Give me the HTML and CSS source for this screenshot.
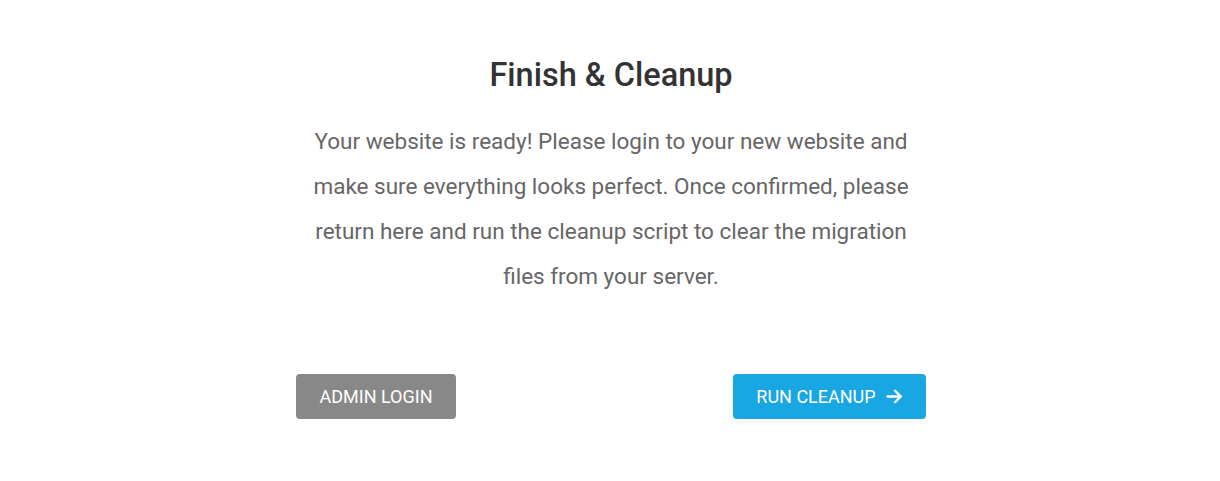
FILE: index.html
```html
<!DOCTYPE html>
<html>
<head>
<meta charset="utf-8">
<link rel="stylesheet" href="styles.css">
</head>
<body>
<div class="wrap">
  <h1 class="title">Finish &amp; Cleanup</h1>
  <p class="text">Your website is ready! Please login to your new website and make sure everything looks perfect. Once confirmed, please return here and run the cleanup script to clear the migration files from your server.</p>
  <div class="actions">
    <button class="btn btn-gray">ADMIN LOGIN</button>
    <button class="btn btn-blue">RUN CLEANUP
      <svg class="arrow" width="17" height="15" viewBox="0 0 17 15"><path d="M1.5 7.5h13.5M9 1.8l5.8 5.7L9 13.2" fill="none" stroke="#fff" stroke-width="2.3" stroke-linecap="round" stroke-linejoin="round"/></svg>
    </button>
  </div>
</div>
</body>
</html>
```
FILE: styles.css
```css
html, body { margin: 0; padding: 0; background: #fff; }
body { font-family: Roboto, "Liberation Sans", sans-serif; }
.wrap { width: 630px; margin: 0 auto; padding: 53px 0 0 2px; text-align: center; }
.title { margin: 0; font-size: 32.5px; font-weight: 500; color: #333; line-height: 44px; }
.text { margin: 22px auto 0; width: 630px; font-size: 22.5px; line-height: 45px; color: #666; }
.actions { display: flex; justify-content: space-between; margin-top: 75px; }
.btn { border: 0; border-radius: 4px; height: 45px; padding: 0; font-family: inherit; font-size: 18px; color: #fff; display: inline-flex; align-items: center; justify-content: center; gap: 10px; }
.btn-gray { background: #888; width: 160px; }
.btn-blue { background: #18a7e2; width: 193px; }
.arrow { display: block; }
```
